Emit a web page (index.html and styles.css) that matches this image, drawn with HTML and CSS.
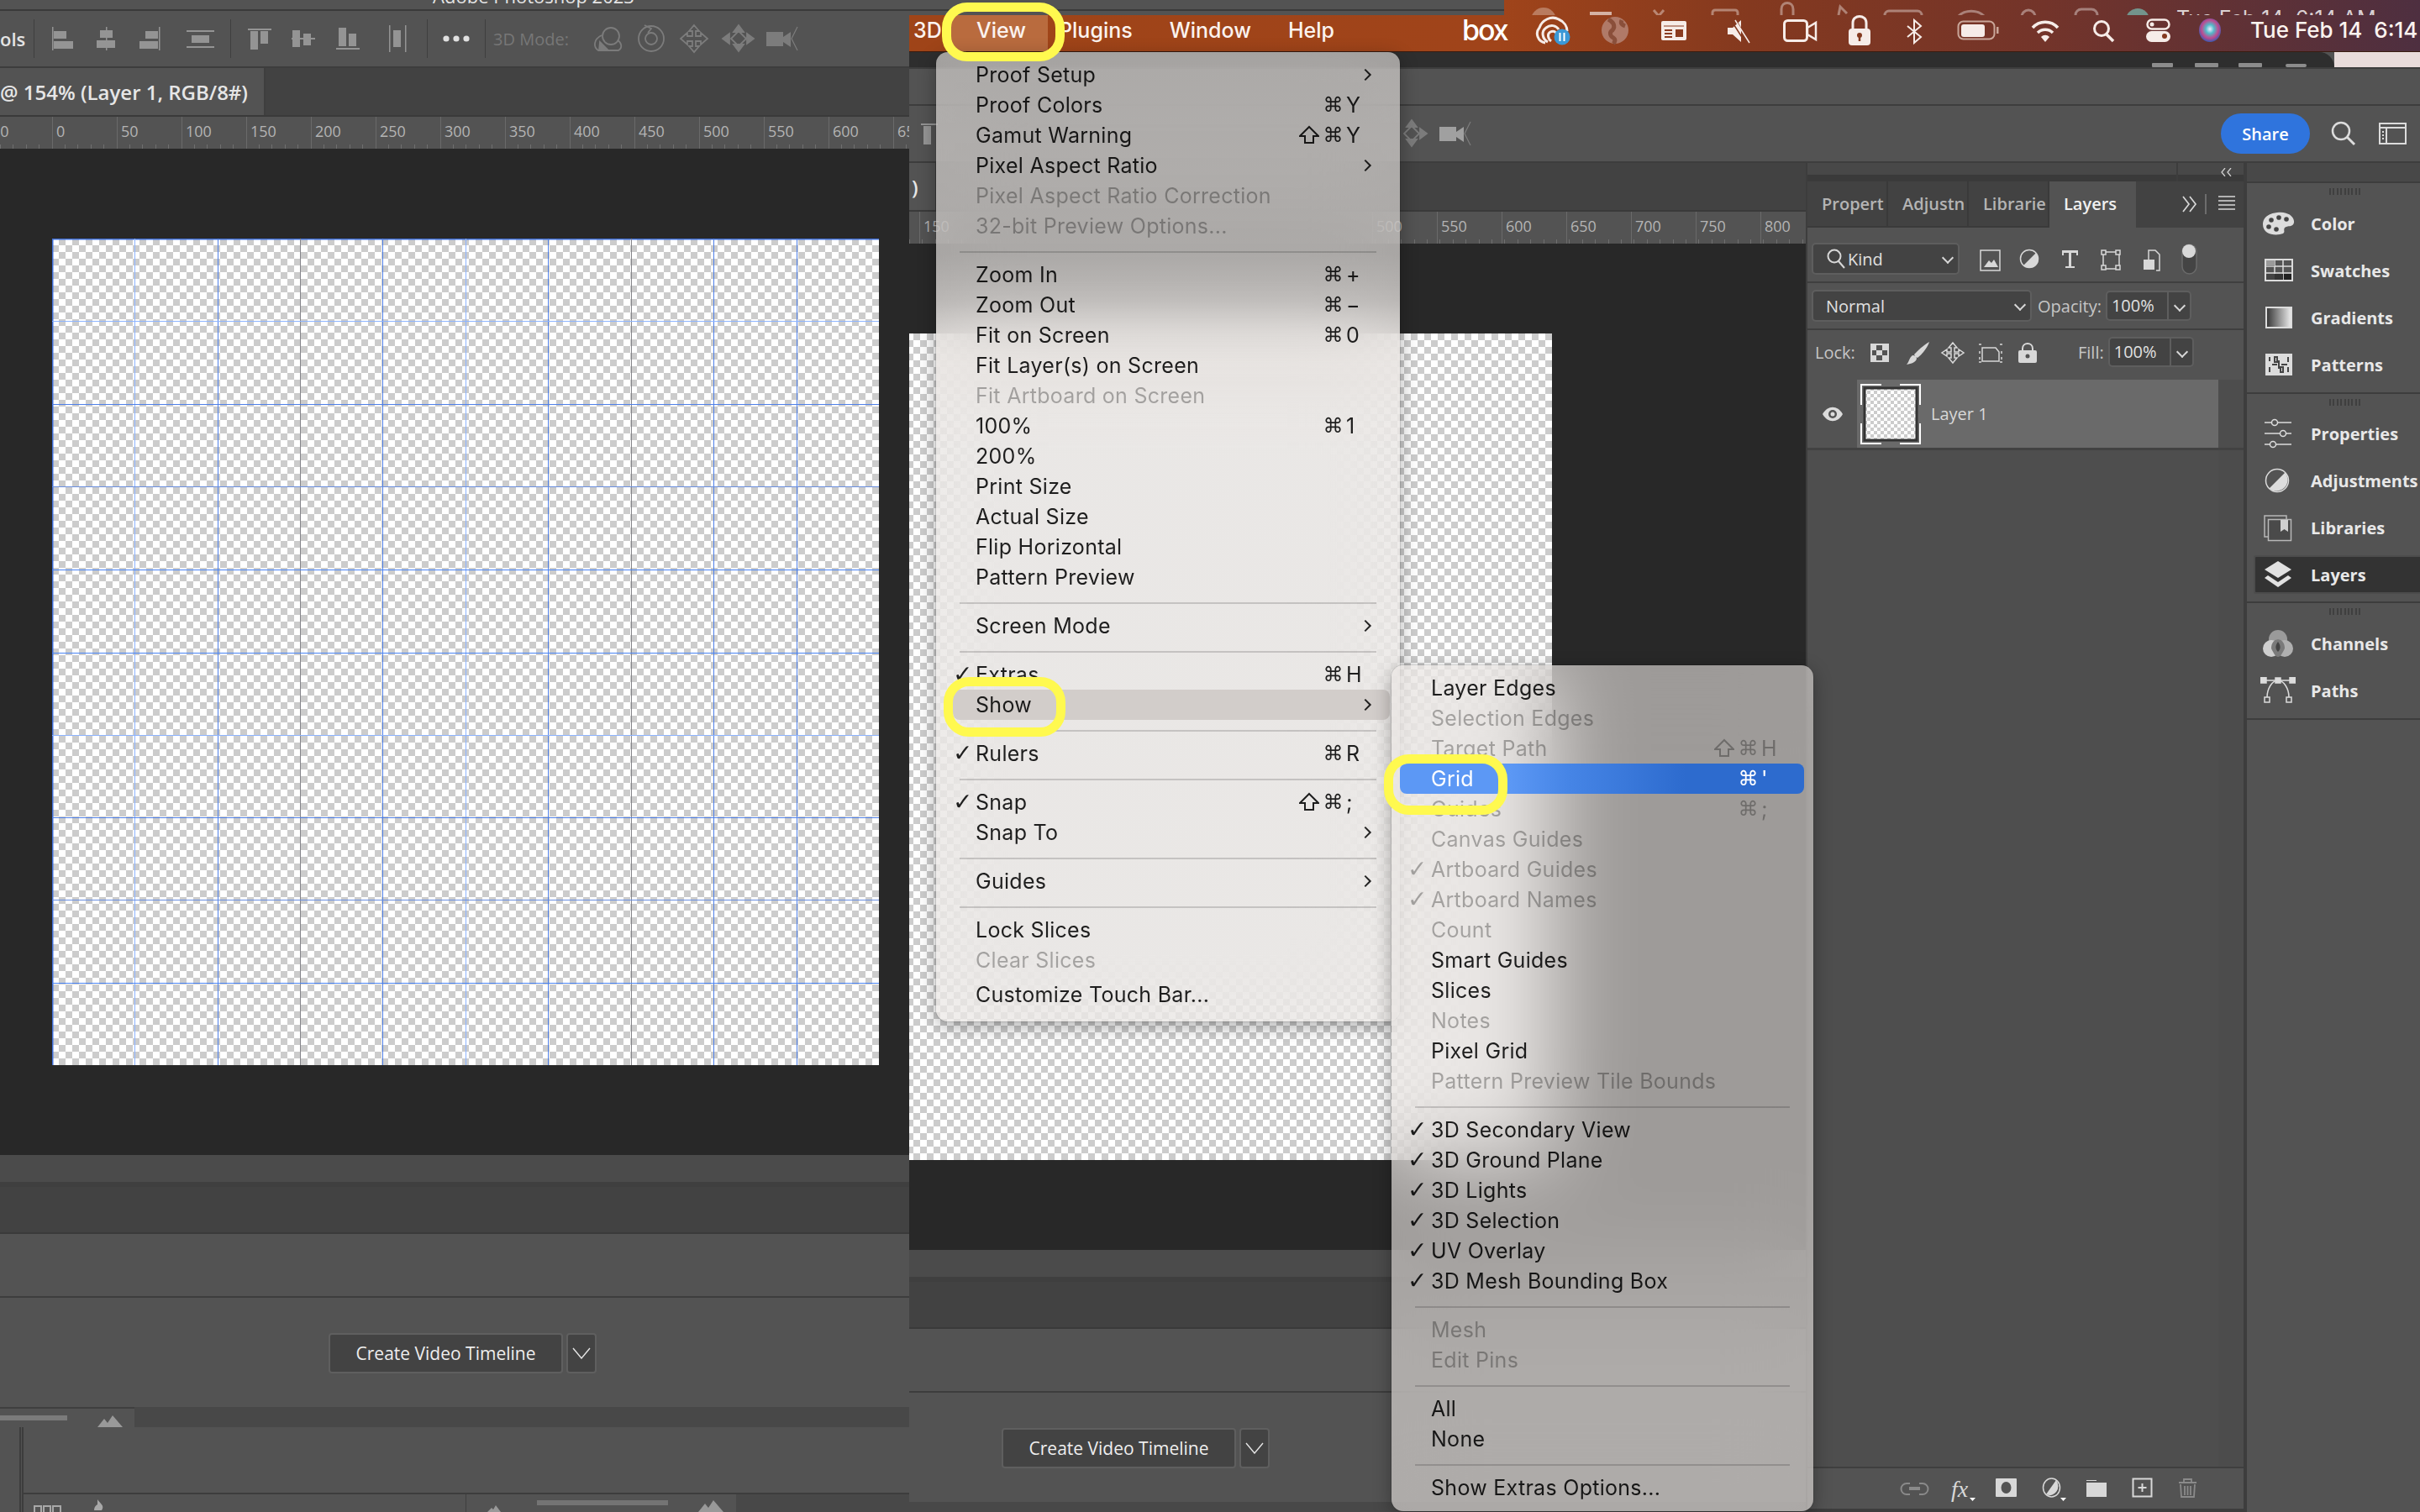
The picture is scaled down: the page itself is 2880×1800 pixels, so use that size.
FILE: index.html
```html
<!DOCTYPE html>
<html lang="en">
<head>
    <meta charset="UTF-8">
    <title>Photoshop - show grid</title>
    <link rel="stylesheet" href="styles.css">
</head>
<body>
    <div class="screen">
        <!-- Left capture: grid is on -->
        <section class="pane pane-left">
            <div class="top-strip"><span class="app-title">Adobe Photoshop 2023</span></div>
            <div class="options">
                <span class="tool-text">ols</span>
                <i class="vsep"></i>
                <svg width="233" height="66" viewBox="41 13 233 66" fill="#949494">
                    <rect x="62" y="32" width="1.5" height="28"/><rect x="64" y="37" width="15" height="9"/><rect x="64" y="49" width="23" height="9"/>
                    <rect x="126" y="32" width="1.5" height="28"/><rect x="119" y="36" width="15" height="9"/><rect x="115" y="48" width="22" height="9"/>
                    <rect x="189" y="32" width="1.5" height="28"/><rect x="173" y="37" width="15" height="9"/><rect x="166" y="49" width="22" height="9"/>
                    <rect x="222" y="36" width="33" height="2"/><rect x="228" y="42" width="21" height="9"/><rect x="222" y="55" width="33" height="2"/>
                </svg>
                <i class="vsep"></i>
                <svg width="233" height="66" viewBox="275 13 233 66" fill="#949494">
                    <rect x="295" y="34" width="28" height="2"/><rect x="298" y="37" width="9" height="22"/><rect x="310" y="37" width="9" height="15"/>
                    <rect x="347" y="45" width="28" height="2"/><rect x="348" y="36" width="9" height="20"/><rect x="361" y="40" width="9" height="14"/>
                    <rect x="400" y="57" width="28" height="2"/><rect x="403" y="33" width="9" height="22"/><rect x="415" y="40" width="9" height="15"/>
                    <rect x="463" y="30" width="1.5" height="32"/><rect x="468" y="36" width="9" height="20"/><rect x="482" y="30" width="1.5" height="32"/>
                </svg>
                <i class="vsep"></i>
                <svg width="68" height="66" viewBox="509 13 68 66" fill="#e0e0e0">
                    <circle cx="531" cy="46" r="3.6"/><circle cx="543" cy="46" r="3.6"/><circle cx="555" cy="46" r="3.6"/>
                </svg>
                <i class="vsep"></i>
                <span class="mode-label">3D Mode:</span>
                <svg width="270" height="66" viewBox="695 13 270 66" fill="none" stroke="#7c7c7c" stroke-width="1.8">
                    <circle cx="727" cy="43" r="10"/><path d="M716 42c-10 5-10 14-4 18h24c5-3 4-9-1-12"/><path d="M714 50l-1 10h11z" fill="#7c7c7c"/>
                    <circle cx="775" cy="46" r="15"/><circle cx="775" cy="46" r="7"/><path d="M767 30l8 4-4 5" />
                    <path d="M826 30l6 7h-4v6h6v-4l8 7-8 7v-4h-6v6h4l-6 7-6-7h4v-6h-6v4l-8-7 8-7v4h6v-6h-4z"/>
                    <path d="M879 30l6 8h-12zM879 61l6-8h-12zM860 46l8-6v12zM897 46l-8-6v12z" fill="#7c7c7c"/><path d="M879 37l9 9-9 9-9-9z"/>
                    <path d="M912 38h20v17h-20zM932 44l9-6v18l-9-6z" fill="#7c7c7c" stroke="none"/><path d="M949 32l-7 14 7 14" stroke-width="1.2"/>
                </svg>
            </div>
            <div class="doc">
                <div class="doc-tabs">
                    <div class="doc-tab tab-left">@ 154% (Layer 1, RGB/8#)</div>
                </div>
                <div class="ruler ruler-left">
                    <span>50</span><span>0</span><span>50</span><span>100</span><span>150</span><span>200</span><span>250</span><span>300</span><span>350</span><span>400</span><span>450</span><span>500</span><span>550</span><span>600</span><span>650</span>
                </div>
                <div class="canvas canvas-left">
                    <div class="artboard artboard-left">
                        <svg class="grid-lines" width="984" height="984" viewBox="0 0 984 984">
                            <path class="gl-edge" d="M.75 984V.75H984"/>
                            <path class="gl-light" d="M98.5 0v984M492.5 0v984"/>
                            <path class="gl-blue" d="M197.500 0v984M393.500 0v984M590.500 0v984M787.500 0v984M886.500 0v984"/>
                            <path class="gl-grey" d="M295.500 0v984M689.500 0v984"/>
                            <path class="gl-light" d="M0 98.500h984M0 591.500h984"/>
                            <path class="gl-blue" d="M0 197.500h984M0 689.500h984"/>
                            <path class="gl-mid" d="M0 295.500h984M0 787.500h984"/>
                            <path class="gl-strong" d="M0 394.500h984M0 493.500h984M0 886.500h984"/>
                        </svg>
                    </div>
                </div>
                <div class="strip-a"></div>
                <div class="strip-line"></div>
                <div class="strip-b"></div>
                <div class="strip-c"></div>
                <div class="timeline">
                    <button class="video-btn">Create Video Timeline</button>
                    <button class="video-drop"><svg width="22" height="14" viewBox="0 0 22 14" fill="none" stroke="#e6e6e6" stroke-width="1.4"><path d="M1 1l10 12L21 1"/></svg></button>
                </div>
                <div class="tl-foot">
                    <div class="tl-bar">
                        <div class="tl-zoom">
                            <span class="tl-thumb"></span>
                            <svg class="tl-mount" width="32" height="14" viewBox="0 0 32 14" fill="#999"><path d="M0 14L8 4l4 5 6-9 12 14z"/></svg>
                        </div>
                        <div class="tl-track"></div>
                    </div>
                    <div class="tl-body">
                        <div class="tl-empty"></div>
                        <div class="tl-tools">
                            <svg width="106" height="21" viewBox="28 1779 106 21" fill="none" stroke="#a8a8a8" stroke-width="2">
                                <path d="M41 1793h8v8h-8zM52 1793h8v8h-8zM63 1793h9v8h-9z"/>
                                <path d="M116 1791v-6c3 5 9 7 5 13h-9c0-4 2-6 4-7z" fill="#a8a8a8" stroke="none"/>
                            </svg>
                            <div class="tl-zoom-b">
                                <svg class="tl-mini" width="16" height="8" viewBox="0 0 16 8" fill="#999"><path d="M0 8l5-5 2 2 3-5 6 8z"/></svg>
                                <span class="tl-thumb-b"></span>
                                <svg width="32" height="14" viewBox="0 0 32 14" fill="#999"><path d="M0 14L8 4l4 5 6-9 12 14z"/></svg>
                            </div>
                            <div class="tl-dark"></div>
                        </div>
                    </div>
                </div>
            </div>
        </section>

        <!-- Right capture: menu open -->
        <section class="pane pane-right">
            <div class="menubar-wrap">
                <div class="menubar-top">
                    <div class="top-grey"></div>
                    <svg class="ghost-icons" width="790" height="18" viewBox="1790 0 790 18" fill="none" stroke="rgba(255,255,255,.38)" stroke-width="3">
                        <circle cx="1837" cy="24" r="15" fill="rgba(255,255,255,.3)" stroke="none"/>
                        <rect x="1892" y="14" width="26" height="20" fill="rgba(255,255,255,.6)" stroke="none"/>
                        <path d="M1968 12l6 7 6-7"/>
                        <rect x="2038" y="12" width="30" height="20" rx="3"/>
                        <path d="M2120 18v-7c0-10 14-10 14 0v7"/>
                        <path d="M2188 18l2-10 8 8"/>
                        <rect x="2243" y="13" width="44" height="20" rx="5"/>
                        <path d="M2330 20c8-9 24-9 32 0"/>
                        <circle cx="2414" cy="20" r="8"/>
                        <rect x="2470" y="11" width="26" height="16" rx="7"/>
                        <circle cx="2544" cy="24" r="14" fill="rgba(120,190,180,.7)" stroke="none"/>
                    </svg>
                    <span class="ghost-clock">Tue Feb 14  6:14 AM</span>
                </div>
                <div class="menubar">
                    <div class="mb-menus">
                        <span class="mb-item mb-first">3D</span>
                        <span class="mb-item mb-active">View</span>
                        <span class="mb-item">Plugins</span>
                        <span class="mb-item">Window</span>
                        <span class="mb-item">Help</span>
                    </div>
                    <span class="box-logo">box</span>
                    <svg class="status-icons" width="830" height="44" viewBox="1820 18 830 44">
                        <g fill="none" stroke="#f6ece8" stroke-width="3">
                            <path d="M1839 51a11 11 0 0 1-7-18c3-9 14-15 23-10 7 3 10 9 10 14"/><path d="M1842 50c-7-4-8-13-2-17 5-4 12-3 15 2"/><path d="M1846 49c-4-3-5-9-1-11 4-2 7 0 8 3"/>
                        </g>
                        <circle cx="1859" cy="44" r="9.500" fill="#3b98d6"/><path d="M1856.500 39v10M1861.500 39v10" stroke="#fff" stroke-width="2"/>
                        <circle cx="1922" cy="36" r="16" fill="#b07a68"/><path d="M1914 23c6 3 9 8 5 13-4 2-3 7 1 9 3 2 2 5 0 7M1930 24c-2 4 1 6 4 7" fill="none" stroke="#8a4f3a" stroke-width="5"/>
                        <rect x="1977" y="25" width="30" height="23" rx="2" fill="#f6ece8"/><path d="M1980 31h24" stroke="#8a3b20" stroke-width="1"/><path d="M1981 36h9M1981 40h9M1981 44h9" stroke="#8a3b20" stroke-width="2"/><rect x="1994" y="35" width="9" height="9" fill="#8a3b20"/>
                        <path d="M2056 33h6l10-9v26l-10-9h-6z" fill="#f6ece8"/><path d="M2060 24l18 28M2066 24l14 24" stroke="#83391f" stroke-width="1.500"/><path d="M2065 24l17 27" stroke="#f6ece8" stroke-width="1.500"/>
                        <rect x="2123.500" y="24.500" width="27" height="24" rx="4" fill="none" stroke="#f6ece8" stroke-width="3"/><path d="M2151 33l10-6v20l-10-6z" fill="none" stroke="#f6ece8" stroke-width="2.500"/>
                        <path d="M2205 36v-9c0-10 16-10 16 0v9" fill="none" stroke="#f6ece8" stroke-width="3"/><rect x="2200" y="34" width="26" height="20" rx="4" fill="#f6ece8"/><circle cx="2213" cy="42" r="3" fill="#83391f"/><path d="M2213 43v6" stroke="#83391f" stroke-width="2.500"/>
                        <path d="M2270 31l16 13-8 7V24l8 7-16 13" fill="none" stroke="#f6ece8" stroke-width="2"/>
                        <rect x="2330.500" y="25.500" width="43" height="21" rx="6" fill="none" stroke="#c9a699" stroke-width="2"/><rect x="2334" y="29" width="28" height="15" rx="3" fill="#f6ece8"/><rect x="2376" y="32" width="2.500" height="8" fill="#c9a699"/>
                        <g fill="none" stroke="#f6ece8" stroke-width="3.500"><path d="M2419 33c8-9 22-9 30 0"/><path d="M2425 39c5-5 13-5 18 0"/></g><path d="M2429 44c3-3 7-3 10 0l-5 6z" fill="#f6ece8"/>
                        <circle cx="2501" cy="34" r="8.500" fill="none" stroke="#f6ece8" stroke-width="3"/><path d="M2507 41l8 8" stroke="#f6ece8" stroke-width="3.500"/>
                        <rect x="2555.500" y="23.500" width="26" height="11" rx="5.500" fill="none" stroke="#f6ece8" stroke-width="2.500"/><circle cx="2561" cy="29" r="2.500" fill="#f6ece8"/><rect x="2554" y="37" width="29" height="13" rx="6.500" fill="#f6ece8"/><circle cx="2576" cy="43" r="3" fill="#83391f"/>
                        <defs><radialGradient id="siri" cx="50%" cy="45%" r="55%"><stop offset="0" stop-color="#eef"/><stop offset=".35" stop-color="#52b8c8"/><stop offset=".7" stop-color="#c04a90"/><stop offset="1" stop-color="#3a5ab0"/></radialGradient></defs>
                        <ellipse cx="2630" cy="36" rx="13" ry="14" fill="url(#siri)"/>
                    </svg>
                    <span class="clock">Tue Feb 14  6:14 AM</span>
                </div>
            </div>
            <div class="win-chrome">
                <svg class="chrome-ghost" width="210" height="5" viewBox="2570 75 210 5" fill="#8c8c8c">
                    <rect x="2571" y="75" width="25" height="5" rx="1"/><rect x="2622" y="75" width="28" height="5" rx="1"/><rect x="2674" y="75" width="28" height="5" rx="1"/><rect x="2730" y="76" width="25" height="4" rx="2"/>
                </svg>
            </div>
            <div class="title-gap"></div>
            <div class="options options-right">
                <svg class="right-align-icons" width="34" height="66" viewBox="1082 126 34 66" fill="#949494">
                    <rect x="1096" y="147" width="28" height="2"/><rect x="1099" y="150" width="9" height="22"/>
                </svg>
                <svg class="right-3d-icons" width="100" height="66" viewBox="1655 126 100 66" fill="none" stroke="#7c7c7c" stroke-width="1.8">
                    <path d="M1680 143l6 8h-12zM1680 174l6-8h-12zM1698 159l-8-6v12z" fill="#7c7c7c"/><path d="M1680 150l9 9-9 9-9-9z"/>
                    <path d="M1713 151h20v17h-20zM1733 157l9-6v18l-9-6z" fill="#a0a0a0" stroke="none"/><path d="M1750 145l-7 14 7 14" stroke-width="1.2"/>
                </svg>
                <button class="share-btn">Share</button>
                <svg class="opt-search" width="30" height="30" viewBox="0 0 30 30" fill="none" stroke="#dcdcdc" stroke-width="2.500"><circle cx="12" cy="12" r="10"/><path d="M19 19l9 9" stroke-width="3"/></svg>
                <svg class="opt-panel" width="33" height="26" viewBox="0 0 33 26" fill="none" stroke="#dcdcdc" stroke-width="2"><rect x="1" y="1" width="31" height="24"/><path d="M1 6h31M9 6v19" /><path d="M4 11h2M4 15h2M4 19h2" stroke-width="2"/></svg>
            </div>
            <div class="work">
                <div class="doc doc-right">
                    <div class="doc-tabs">
                        <div class="doc-tab tab-right">)</div>
                    </div>
                    <div class="ruler ruler-right">
                        <span>150</span><b class="ruler-gap"></b><span>500</span><span>550</span><span>600</span><span>650</span><span>700</span><span>750</span><span>800</span>
                    </div>
                    <div class="canvas">
                        <div class="artboard artboard-right"></div>
                    </div>
                    <div class="strip-a"></div>
                    <div class="strip-line"></div>
                    <div class="strip-b"></div>
                    <div class="strip-c"></div>
                    <div class="timeline timeline-right">
                        <button class="video-btn">Create Video Timeline</button>
                        <button class="video-drop"><svg width="22" height="14" viewBox="0 0 22 14" fill="none" stroke="#e6e6e6" stroke-width="1.4"><path d="M1 1l10 12L21 1"/></svg></button>
                    </div>
                    <div class="tl-end"></div>
                </div>

                <!-- Layers panel -->
                <div class="layers-panel">
                    <div class="panel-head">
                        <span class="panel-rule"></span>
                        <svg class="panel-collapse" width="14" height="10" viewBox="0 0 14 10" fill="none" stroke="#d0d0d0" stroke-width="1.300"><path d="M5 0L1 5l4 5M12 0L8 5l4 5"/></svg>
                    </div>
                    <div class="panel-tabs">
                        <div class="ptab"><span>Propert</span></div>
                        <div class="ptab"><span>Adjustn</span></div>
                        <div class="ptab"><span>Librarie</span></div>
                        <div class="ptab ptab-on"><span>Layers</span></div>
                        <svg class="tabs-menu" width="64" height="24" viewBox="0 0 64 24" fill="none" stroke="#d8d8d8" stroke-width="1.700">
                            <path d="M1 3l7 9-7 9M9 3l7 9-7 9"/><path d="M28 0v24" stroke="#8a8a8a" stroke-width="1.200"/>
                            <path d="M43 3h20M43 8h20M43 13h20M43 18h20" stroke-width="1.600"/>
                        </svg>
                    </div>
                    <div class="prow prow-filter">
                        <div class="drop drop-kind">
                            <svg width="22" height="24" viewBox="0 0 22 24" fill="none" stroke="#d8d8d8" stroke-width="2"><circle cx="9" cy="9" r="7.500"/><path d="M14 15l7 8"/></svg>
                            <span>Kind</span>
                            <i class="chev"></i>
                        </div>
                        <svg class="filter-icons" width="280" height="64" viewBox="2340 271 280 64">
                            <g fill="none" stroke="#d8d8d8" stroke-width="1.500">
                                <rect x="2357" y="298" width="23" height="24"/>
                                <circle cx="2415" cy="308" r="10.500"/>
                                <rect x="2503" y="300" width="19" height="20"/>
                                <rect x="2501" y="298" width="5" height="5" fill="#535353"/><rect x="2518" y="298" width="5" height="5" fill="#535353"/><rect x="2501" y="316" width="5" height="5" fill="#535353"/><rect x="2518" y="316" width="5" height="5" fill="#535353"/>
                                <path d="M2557 309v-11h8l5 5v19h-4"/>
                            </g>
                            <g fill="#d8d8d8">
                                <path d="M2361 318l6-8 3 3 3-4 5 9z"/>
                                <path d="M2423 301a10.500 10.500 0 0 1-15 15z"/>
                                <path d="M2454 298h19v6h-2v-3h-6v16h4v2h-11v-2h4v-16h-6v3h-2z"/>
                                <rect x="2551" y="309" width="13" height="12"/>
                            </g>
                            <rect x="2597" y="291" width="17" height="35" rx="8.500" fill="#444" stroke="#6a6a6a" stroke-width="1.500"/>
                            <circle cx="2605" cy="299" r="8" fill="#d8d8d8"/>
                        </svg>
                    </div>
                    <div class="prow prow-blend">
                        <div class="drop drop-blend"><span>Normal</span><i class="chev"></i></div>
                        <span class="plabel plabel-op">Opacity:</span>
                        <div class="num-box"><span>100%</span><b><i class="chev"></i></b></div>
                    </div>
                    <div class="prow prow-lock">
                        <span class="plabel">Lock:</span>
                        <svg class="lock-icons" width="220" height="58" viewBox="2215 393 220 58">
                            <rect x="2225" y="409" width="22" height="22" fill="#d8d8d8"/>
                            <path d="M2232 411h7v6h-7zM2232 423h7v6h-7zM2227 417h5v6h-5zM2239 417h6v6h-6z" fill="#535353"/>
                            <path d="M2295 407c-2 7-9 15-14 19-2-1-3-2-4-4 5-5 12-12 18-15zM2275 423c3 0 5 2 5 4-1 4-6 6-12 7 3-3 3-8 7-11z" fill="#d8d8d8"/>
                            <path d="M2323 408l5 6h-3v5h5v-3l6 4-6 4v-3h-5v5h3l-5 6-5-6h3v-5h-5v3l-6-4 6-4v3h5v-5h-3z" fill="none" stroke="#d8d8d8" stroke-width="1.500"/>
                            <path d="M2358 414h16l4 5v11h-20z" fill="none" stroke="#d8d8d8" stroke-width="1.500"/>
                            <path d="M2354 410h3M2379 410h3M2354 431h3M2379 431h3M2355 418v3M2355 425v3M2381 418v3M2381 425v3" stroke="#d8d8d8" stroke-width="1.500"/>
                            <path d="M2406 418v-3c0-8 12-8 12 0v3" fill="none" stroke="#d8d8d8" stroke-width="2"/>
                            <rect x="2401" y="417" width="22" height="15" rx="2" fill="#d8d8d8"/><circle cx="2412" cy="424" r="2.500" fill="#535353"/>
                        </svg>
                        <span class="plabel plabel-fill">Fill:</span>
                        <div class="num-box"><span>100%</span><b><i class="chev"></i></b></div>
                    </div>
                    <div class="layer-wrap">
                        <div class="layer-eye">
                            <svg width="26" height="18" viewBox="0 0 26 18"><path d="M1 9c6-11 18-11 24 0-6 11-18 11-24 0z" fill="#dcdcdc"/><circle cx="13" cy="9" r="5" fill="#535353"/><circle cx="13" cy="9" r="2.500" fill="#dcdcdc"/></svg>
                        </div>
                        <div class="layer-main">
                            <svg class="layer-thumb" width="72" height="72" viewBox="0 0 72 72">
                                <defs><pattern id="thumb-check" width="8" height="8" patternUnits="userSpaceOnUse"><rect width="8" height="8" fill="#fff"/><rect width="4" height="4" fill="#ccc"/><rect x="4" y="4" width="4" height="4" fill="#ccc"/></pattern></defs>
                                <rect x="5" y="5" width="62" height="62" fill="url(#thumb-check)" stroke="#333" stroke-width="3"/>
                                <path d="M1 25V1h24M47 1h24v24M71 47v24H47M25 71H1V47" fill="none" stroke="#fff" stroke-width="2"/>
                            </svg>
                            <span class="layer-name">Layer 1</span>
                        </div>
                        <div class="layer-scroll"></div>
                    </div>
                    <div class="panel-empty"><div class="panel-scroll"></div></div>
                    <div class="panel-foot">
                        <svg class="foot-icons" width="380" height="48" viewBox="2250 1748 380 48">
                            <path d="M2273 1766h-4a6 6 0 0 0 0 13h4M2284 1766h4a6 6 0 0 1 0 13h-4" fill="none" stroke="#8a8a8a" stroke-width="2"/><rect x="2272" y="1770" width="13" height="4" fill="#8a8a8a"/>
                            <text class="fx-text" x="2322" y="1782">fx</text>
                            <path d="M2344 1783h7l-3.500 4zM2452 1783h7l-3.500 4z" fill="#fff"/>
                            <rect x="2375" y="1760" width="25" height="22" rx="1" fill="#d8d8d8"/><ellipse cx="2387.500" cy="1771" rx="6" ry="7" fill="#535353"/>
                            <ellipse cx="2441.500" cy="1771" rx="10" ry="11" fill="none" stroke="#d8d8d8" stroke-width="1.500"/><path d="M2447 1762a10 11 0 0 1-12 17z" fill="#d8d8d8"/>
                            <path d="M2483 1762h12v1h-12zM2483 1765h24v17h-24z" fill="#d8d8d8"/>
                            <rect x="2538.500" y="1760.500" width="22" height="21" fill="none" stroke="#d8d8d8" stroke-width="2"/><path d="M2549.500 1766v10M2544.500 1771h10" stroke="#d8d8d8" stroke-width="2"/>
                            <path d="M2593 1765h21M2599 1765v-4h9v4M2595 1767l1 15h15l1-15M2600 1769v11M2603.500 1769v11M2607 1769v11" fill="none" stroke="#8a8a8a" stroke-width="1.800"/>
                        </svg>
                    </div>
                </div>
                <div class="side-rule"></div>

                <!-- Collapsed panel dock -->
                <div class="dock">
                    <div class="dock-head"></div>
                    <div class="dock-group">
                        <div class="grip"></div>
                        <div class="dock-row">
                            <svg width="42" height="30" viewBox="0 0 42 30"><path d="M20 2c12-2 21 5 20 12-1 6-8 3-11 6-2 3 1 5-2 7-8 3-24 2-24-11C3 8 10 3 20 2z" fill="#dcdcdc"/><g fill="#444"><circle cx="13" cy="11" r="2.800"/><circle cx="22" cy="8" r="2.800"/><circle cx="31" cy="10" r="2.800"/><circle cx="10" cy="19" r="2.800"/><circle cx="19" cy="22" r="2.800"/></g></svg>
                            <span>Color</span>
                        </div>
                        <div class="dock-row">
                            <svg width="42" height="30" viewBox="0 0 42 30"><rect x="6" y="2" width="32" height="25" fill="none" stroke="#dcdcdc" stroke-width="2"/><path d="M17 2v25M27 2v25M6 10h32M6 18h32" stroke="#dcdcdc" stroke-width="1.500"/><rect x="7" y="3" width="10" height="7" fill="#9a9a9a"/><rect x="28" y="19" width="9" height="7" fill="#222"/><rect x="17" y="19" width="10" height="7" fill="#333"/><rect x="7" y="19" width="10" height="7" fill="#444"/></svg>
                            <span>Swatches</span>
                        </div>
                        <div class="dock-row">
                            <svg width="42" height="30" viewBox="0 0 42 30"><defs><linearGradient id="grad-ico"><stop offset="0" stop-color="#333"/><stop offset="1" stop-color="#eee"/></linearGradient></defs><rect x="7" y="3" width="30" height="24" fill="url(#grad-ico)" stroke="#dcdcdc" stroke-width="2"/></svg>
                            <span>Gradients</span>
                        </div>
                        <div class="dock-row">
                            <svg width="42" height="30" viewBox="0 0 42 30"><rect x="6" y="2" width="32" height="26" fill="#dcdcdc"/><path d="M11 6v5M11 18v6M17 6h3v6h-3zM24 18h3v6h-3zM33 6v6M33 18v6M14 15h6M25 15h7M22 10v10" stroke="#444" stroke-width="2" fill="none"/></svg>
                            <span>Patterns</span>
                        </div>
                    </div>
                    <div class="dock-group dock-group-mid">
                        <div class="grip"></div>
                        <div class="dock-row">
                            <svg width="42" height="38" viewBox="0 0 42 38" fill="none" stroke="#dcdcdc" stroke-width="1.500"><path d="M5 6h9M21 6h16M5 19h18M31 19h6M5 32h6M19 32h18"/><circle cx="17" cy="6" r="3.500"/><circle cx="27" cy="19" r="3.500"/><circle cx="15" cy="32" r="3.500"/></svg>
                            <span>Properties</span>
                        </div>
                        <div class="dock-row">
                            <svg width="42" height="30" viewBox="0 0 42 30"><circle cx="20" cy="15" r="13.500" fill="none" stroke="#dcdcdc" stroke-width="1.500"/><path d="M29.500 5.500a13.500 13.500 0 0 1-19 19z" fill="#dcdcdc"/></svg>
                            <span>Adjustments</span>
                        </div>
                        <div class="dock-row">
                            <svg width="42" height="34" viewBox="0 0 42 34" fill="none" stroke="#b8b8b8" stroke-width="1.500"><path d="M10 28H5V3h26v4"/><rect x="9.500" y="7.500" width="27" height="25" fill="#4a4a4a"/><path d="M24 8h9v14l-4.500-3-4.500 3z" fill="#d0d0d0" stroke="none"/></svg>
                            <span>Libraries</span>
                        </div>
                        <div class="dock-row dock-on">
                            <svg width="42" height="34" viewBox="0 0 42 34" fill="#e2e2e2"><path d="M21 1l16 10-16 10L5 11z"/><path d="M9 18l12 8 12-8 4 3-16 11L5 21z"/></svg>
                            <span>Layers</span>
                        </div>
                    </div>
                    <div class="dock-group">
                        <div class="grip"></div>
                        <div class="dock-row">
                            <svg width="42" height="34" viewBox="0 0 42 34"><circle cx="21" cy="12" r="11" fill="#9a9a9a"/><circle cx="13" cy="23" r="10" fill="#cfcfcf"/><circle cx="29" cy="23" r="10" fill="#b0b0b0"/><path d="M21 12c6 1 8 6 8 11-3 6-5 10-8 10s-5-4-8-10c0-5 2-10 8-11z" fill="#7a7a7a"/><path d="M21 15c3 4 4 8 0 12-4-4-3-8 0-12z" fill="#444"/></svg>
                            <span>Channels</span>
                        </div>
                        <div class="dock-row">
                            <svg width="42" height="32" viewBox="0 0 42 32" fill="none" stroke="#dcdcdc" stroke-width="1.500"><path d="M5 4h32"/><path d="M8 24C8 14 14 4 21 4s13 10 13 20"/><rect x="0" y="0" width="7" height="7" fill="#dcdcdc"/><rect x="18" y="1" width="6" height="6" fill="#dcdcdc"/><rect x="35" y="0" width="7" height="7" fill="#dcdcdc"/><rect x="5" y="24" width="6" height="6"/><rect x="31" y="24" width="6" height="6"/></svg>
                            <span>Paths</span>
                        </div>
                    </div>
                </div>
            </div>
        </section>

        <!-- View menu -->
        <div class="menu menu-view">
            <div class="row"><span class="tick"></span><span class="label">Proof Setup</span><i class="arrow"></i></div>
            <div class="row"><span class="tick"></span><span class="label">Proof Colors</span><span class="keys"><em>⌘</em><b>Y</b></span></div>
            <div class="row"><span class="tick"></span><span class="label">Gamut Warning</span><span class="keys"><svg class="shift" width="24" height="24" viewBox="0 0 24 24"><path d="M12 2L23 13h-6v8H7v-8H1z"/></svg><em>⌘</em><b>Y</b></span></div>
            <div class="row"><span class="tick"></span><span class="label">Pixel Aspect Ratio</span><i class="arrow"></i></div>
            <div class="row off"><span class="tick"></span><span class="label">Pixel Aspect Ratio Correction</span></div>
            <div class="row off"><span class="tick"></span><span class="label">32-bit Preview Options...</span></div>
            <div class="sep"></div>
            <div class="row"><span class="tick"></span><span class="label">Zoom In</span><span class="keys"><em>⌘</em><b>+</b></span></div>
            <div class="row"><span class="tick"></span><span class="label">Zoom Out</span><span class="keys"><em>⌘</em><b>−</b></span></div>
            <div class="row"><span class="tick"></span><span class="label">Fit on Screen</span><span class="keys"><em>⌘</em><b>0</b></span></div>
            <div class="row"><span class="tick"></span><span class="label">Fit Layer(s) on Screen</span></div>
            <div class="row off"><span class="tick"></span><span class="label">Fit Artboard on Screen</span></div>
            <div class="row"><span class="tick"></span><span class="label">100%</span><span class="keys"><em>⌘</em><b>1</b></span></div>
            <div class="row"><span class="tick"></span><span class="label">200%</span></div>
            <div class="row"><span class="tick"></span><span class="label">Print Size</span></div>
            <div class="row"><span class="tick"></span><span class="label">Actual Size</span></div>
            <div class="row"><span class="tick"></span><span class="label">Flip Horizontal</span></div>
            <div class="row"><span class="tick"></span><span class="label">Pattern Preview</span></div>
            <div class="sep"></div>
            <div class="row"><span class="tick"></span><span class="label">Screen Mode</span><i class="arrow"></i></div>
            <div class="sep"></div>
            <div class="row"><span class="tick">✓</span><span class="label">Extras</span><span class="keys"><em>⌘</em><b>H</b></span></div>
            <div class="row row-hover"><span class="tick"></span><span class="label">Show</span><i class="arrow"></i></div>
            <div class="sep"></div>
            <div class="row"><span class="tick">✓</span><span class="label">Rulers</span><span class="keys"><em>⌘</em><b>R</b></span></div>
            <div class="sep"></div>
            <div class="row"><span class="tick">✓</span><span class="label">Snap</span><span class="keys"><svg class="shift" width="24" height="24" viewBox="0 0 24 24"><path d="M12 2L23 13h-6v8H7v-8H1z"/></svg><em>⌘</em><b>;</b></span></div>
            <div class="row"><span class="tick"></span><span class="label">Snap To</span><i class="arrow"></i></div>
            <div class="sep"></div>
            <div class="row"><span class="tick"></span><span class="label">Guides</span><i class="arrow"></i></div>
            <div class="sep"></div>
            <div class="row"><span class="tick"></span><span class="label">Lock Slices</span></div>
            <div class="row off"><span class="tick"></span><span class="label">Clear Slices</span></div>
            <div class="row row-touch"><span class="tick"></span><span class="label">Customize Touch Bar...</span></div>
        </div>

        <!-- Show submenu -->
        <div class="menu menu-show">
            <div class="row"><span class="tick"></span><span class="label">Layer Edges</span></div>
            <div class="row off"><span class="tick"></span><span class="label">Selection Edges</span></div>
            <div class="row off"><span class="tick"></span><span class="label">Target Path</span><span class="keys"><svg class="shift" width="24" height="24" viewBox="0 0 24 24"><path d="M12 2L23 13h-6v8H7v-8H1z"/></svg><em>⌘</em><b>H</b></span></div>
            <div class="row row-picked"><span class="tick"></span><span class="label">Grid</span><span class="keys"><em>⌘</em><b>'</b></span></div>
            <div class="row off"><span class="tick"></span><span class="label">Guides</span><span class="keys"><em>⌘</em><b>;</b></span></div>
            <div class="row off"><span class="tick"></span><span class="label">Canvas Guides</span></div>
            <div class="row off"><span class="tick">✓</span><span class="label">Artboard Guides</span></div>
            <div class="row off"><span class="tick">✓</span><span class="label">Artboard Names</span></div>
            <div class="row off"><span class="tick"></span><span class="label">Count</span></div>
            <div class="row"><span class="tick"></span><span class="label">Smart Guides</span></div>
            <div class="row"><span class="tick"></span><span class="label">Slices</span></div>
            <div class="row off"><span class="tick"></span><span class="label">Notes</span></div>
            <div class="row"><span class="tick"></span><span class="label">Pixel Grid</span></div>
            <div class="row off"><span class="tick"></span><span class="label">Pattern Preview Tile Bounds</span></div>
            <div class="sep"></div>
            <div class="row"><span class="tick">✓</span><span class="label">3D Secondary View</span></div>
            <div class="row"><span class="tick">✓</span><span class="label">3D Ground Plane</span></div>
            <div class="row"><span class="tick">✓</span><span class="label">3D Lights</span></div>
            <div class="row"><span class="tick">✓</span><span class="label">3D Selection</span></div>
            <div class="row"><span class="tick">✓</span><span class="label">UV Overlay</span></div>
            <div class="row"><span class="tick">✓</span><span class="label">3D Mesh Bounding Box</span></div>
            <div class="sep"></div>
            <div class="row off"><span class="tick"></span><span class="label">Mesh</span></div>
            <div class="row off"><span class="tick"></span><span class="label">Edit Pins</span></div>
            <div class="sep"></div>
            <div class="row"><span class="tick"></span><span class="label">All</span></div>
            <div class="row"><span class="tick"></span><span class="label">None</span></div>
            <div class="sep"></div>
            <div class="row"><span class="tick"></span><span class="label">Show Extras Options...</span></div>
        </div>

        <!-- Yellow callouts -->
        <div class="callout callout-view"></div>
        <div class="callout callout-show"></div>
        <div class="callout callout-grid"></div>
    </div>
</body>
</html>
```

FILE: styles.css
```css
/* Page */
html, body {
    margin: 0;
    padding: 0;
}
body {
    width: 2880px;
    height: 1800px;
    overflow: hidden;
    background: #535353;
    font-family: "Open Sans", "Noto Sans", sans-serif;
    color: #dcdcdc;
}
button {
    font-family: inherit;
}
svg {
    display: block;
    flex: none;
}
.screen {
    position: relative;
    display: flex;
    width: 2880px;
    height: 1800px;
    overflow: hidden;
}
.pane {
    display: flex;
    flex-direction: column;
    overflow: hidden;
    background: #535353;
}
.pane-left {
    width: 1082px;
    flex: none;
}
.pane-right {
    flex: 1;
    min-width: 0;
    background: linear-gradient(#e9dcdb, #e9dcdb) 1696px 62px / 102px 18px no-repeat, #535353;
}

/* Title bar remains */
.top-strip {
    position: relative;
    height: 11px;
    border-bottom: 2px solid #3a3a3a;
    overflow: hidden;
    text-align: center;
    width: 1270px;
    flex: none;
}
.app-title {
    position: absolute;
    left: 0;
    right: 0;
    top: -17px;
    font-size: 22px;
    line-height: 24px;
    color: #e4e4e4;
}

/* Options bar */
.options {
    display: flex;
    align-items: center;
    height: 66px;
    border-bottom: 2px solid #3d3d3d;
    flex: none;
}
.vsep {
    width: 1px;
    height: 46px;
    flex: none;
    background: #3f3f3f;
}
.tool-text {
    width: 40px;
    flex: none;
    font-size: 22px;
    font-weight: 600;
    color: #e4e4e4;
}
.mode-label {
    width: 117px;
    flex: none;
    box-sizing: border-box;
    padding-left: 9px;
    font-size: 20px;
    color: #777;
}
.options-right {
    width: 100%;
}
.right-3d-icons {
    margin-left: 539px;
}
.share-btn {
    width: 106px;
    height: 48px;
    margin-left: 888px;
    border: none;
    border-radius: 24px;
    background: #2f74dd;
    color: #fff;
    font-size: 20px;
    font-weight: 600;
}
.opt-search {
    margin-left: 25px;
}
.opt-panel {
    margin-left: 27px;
}

/* Document column */
.doc {
    display: flex;
    flex-direction: column;
    width: 1348px;
    flex: none;
}
.doc-right {
    width: 1067px;
}
.doc-tabs {
    height: 56px;
    display: flex;
    flex: none;
    background: #424242;
    border-bottom: 2px solid #3a3a3a;
}
.doc-tab {
    display: flex;
    align-items: center;
    background: #535353;
    border-right: 2px solid #3f3f3f;
    font-size: 24px;
    font-weight: 600;
    color: #e6e6e6;
    white-space: nowrap;
}
.tab-left {
    width: 314px;
}
.tab-right {
    width: 33px;
    padding-left: 3px;
    box-sizing: border-box;
}
.ruler {
    display: flex;
    flex: none;
    height: 38px;
    background:
        repeating-linear-gradient(to right, #6f6f6f 0, #6f6f6f 1px, transparent 1px, transparent 15.4px) 0 100% / 100% 5px no-repeat,
        #535353;
    overflow: hidden;
}
.ruler span {
    flex: none;
    width: 77px;
    box-sizing: border-box;
    padding-left: 4px;
    border-left: 1px solid #6a6a6a;
    font-size: 18px;
    line-height: 34px;
    color: #b4b4b4;
}
.ruler-gap {
    width: 462px;
    flex: none;
}
.ruler-left {
    margin-left: -15px;
    background-position: 15px 100%, 0 0;
}
.ruler-right {
    padding-left: 12px;
}
.canvas {
    height: 1198px;
    flex: none;
    box-sizing: border-box;
    padding-top: 107px;
    background: #282828;
}
.canvas-left {
    padding-left: 62px;
}
.artboard {
    position: relative;
    height: 984px;
    background: conic-gradient(#ccc 25%, #fff 0 50%, #ccc 0 75%, #fff 0) 0 0 / 16px 16px;
}
.artboard-left {
    width: 984px;
}
.artboard-right {
    width: 765px;
    background-position: -3px 0;
}
.grid-lines {
    position: absolute;
    left: 0;
    top: 0;
    fill: none;
    stroke-width: 1;
}
.gl-edge {
    stroke: #3f6fd8;
    stroke-width: 1.5;
}
.gl-light {
    stroke: #8db4ff;
}
.gl-blue {
    stroke: #4f80e8;
}
.gl-mid {
    stroke: #6a8fe0;
}
.gl-strong {
    stroke: #4a85f5;
}
.gl-grey {
    stroke: #85858a;
}
.strip-a {
    height: 32px;
    flex: none;
    background: #4b4b4b;
}
.strip-line {
    height: 6px;
    flex: none;
    background: #3f3f3f;
}
.strip-b {
    height: 54px;
    flex: none;
    background: #424242;
    border-bottom: 2px solid #3a3a3a;
}
.strip-c {
    height: 74px;
    flex: none;
    background: #535353;
    border-bottom: 2px solid #3d3d3d;
}

/* Timeline */
.timeline {
    display: flex;
    align-items: center;
    flex: none;
    height: 130px;
    box-sizing: border-box;
    padding: 1px 0 0 391px;
    gap: 4px;
}
.timeline-right {
    padding-left: 110px;
}
.video-btn,
.video-drop {
    height: 48px;
    background: #434343;
    border: 2px solid #5f5f5f;
    border-radius: 4px;
    color: #eee;
    font-size: 21px;
    font-weight: 400;
    padding: 0;
}
.video-btn {
    width: 279px;
}
.video-drop {
    width: 36px;
    display: flex;
    align-items: center;
    justify-content: center;
}
.tl-foot {
    display: flex;
    flex-direction: column;
    flex: none;
    height: 125px;
}
.tl-bar {
    display: flex;
    height: 24px;
    flex: none;
}
.tl-zoom {
    display: flex;
    width: 160px;
    border-top: 2px solid #3f3f3f;
    box-sizing: border-box;
    align-items: flex-start;
    flex: none;
}
.tl-thumb {
    width: 80px;
    height: 6px;
    margin-top: 8px;
    background: #7b7b7b;
}
.tl-mount {
    margin: 8px 0 0 36px;
}
.tl-track {
    flex: 1;
    background: #484848;
}
.tl-body {
    display: flex;
    flex-direction: column;
    flex: 1;
    margin-left: 23px;
    border-left: 5px double #3d3d3d;
}
.tl-empty {
    flex: 1;
}
.tl-tools {
    display: flex;
    height: 21px;
    flex: none;
    border-top: 2px solid #3d3d3d;
}
.tl-zoom-b {
    display: flex;
    align-items: flex-end;
    width: 321px;
    margin-left: 420px;
    flex: none;
    border-left: 1px solid #3f3f3f;
}
.tl-mini {
    margin: 0 0 0 25px;
}
.tl-thumb-b {
    width: 156px;
    height: 6px;
    margin: 0 36px 8px 43px;
    background: #747474;
}
.tl-dark {
    flex: 1;
    background: #484848;
}
.tl-end {
    height: 12px;
    flex: none;
    background: #484848;
}

/* Right capture, top chrome */
.menubar-wrap {
    height: 62px;
    flex: none;
    background: linear-gradient(to right, #9f4418 0, #a0441a 700px, #84391f 1000px, #73342a 1350px, #4e2f40 100%);
}
.menubar-top {
    display: flex;
    height: 18px;
    overflow: hidden;
}
.top-grey {
    width: 708px;
    height: 11px;
    flex: none;
    background: #535353;
    border-bottom: 2px solid #3a3a3a;
    box-shadow: 0 5px 0 #535353;
}
.ghost-clock {
    height: 18px;
    overflow: hidden;
    margin-left: 10px;
    flex: none;
    font-family: Inter, sans-serif;
    font-size: 25px;
    line-height: 44px;
    white-space: pre;
    color: rgba(255, 255, 255, .8);
}
.menubar {
    display: flex;
    align-items: center;
    height: 43px;
    border-bottom: 1px solid #3a1c10;
    font-family: Inter, sans-serif;
    color: #fbf3ef;
    overflow: hidden;
}
.mb-menus {
    display: flex;
    align-items: center;
    width: 658px;
    height: 100%;
    flex: none;
}
.mb-item {
    height: 100%;
    line-height: 36px;
    padding: 0 22px;
    font-size: 25px;
    font-weight: 500;
}
.mb-first {
    padding: 0 0 0 5px;
    width: 51px;
    box-sizing: border-box;
}
.mb-active {
    padding: 0 26px 0 34px;
    margin-right: -9px;
    margin-left: -5px;
    background: #b96b3e;
}
.box-logo {
    width: 80px;
    flex: none;
    margin-bottom: 8px;
    font-size: 34px;
    font-weight: 500;
    letter-spacing: -2px;
    color: #fff;
    line-height: 34px;
}
.clock {
    margin-left: 28px;
    flex: none;
    font-size: 26px;
    line-height: 36px;
    align-self: flex-start;
    white-space: pre;
    font-weight: 500;
}
.win-chrome {
    display: flex;
    justify-content: flex-end;
    align-items: flex-end;
    width: 1696px;
    height: 18px;
    flex: none;
    box-sizing: border-box;
    padding-right: 8px;
    background: #2e2e2e;
    border-top-right-radius: 18px;
}
.title-gap {
    height: 42px;
    flex: none;
    background: #535353;
    border-top: 2px solid #3d3d3d;
    border-bottom: 2px solid #3d3d3d;
}

/* Work area under the options bar */
.work {
    display: flex;
    flex: 1;
    min-height: 0;
}

/* Layers panel */
.layers-panel {
    display: flex;
    flex-direction: column;
    width: 521px;
    flex: none;
    box-sizing: border-box;
    border-left: 2px solid #3d3d3d;
    background: #535353;
}
.panel-head {
    position: relative;
    height: 14px;
    flex: none;
    background: #484848;
    border-bottom: 8px solid #3a3a3a;
}
.panel-rule {
    position: absolute;
    left: 439px;
    top: 0;
    width: 2px;
    height: 22px;
    background: #3d3d3d;
}
.panel-collapse {
    position: absolute;
    left: 492px;
    top: 6px;
}
.panel-tabs {
    display: flex;
    height: 55px;
    flex: none;
    align-items: stretch;
    background: #424242;
}
.ptab {
    width: 96px;
    flex: none;
    overflow: hidden;
    box-sizing: border-box;
    padding-left: 17px;
    border-right: 2px solid #3a3a3a;
    border-bottom: 2px solid #3a3a3a;
    font-size: 20px;
    font-weight: 600;
    line-height: 53px;
    color: #b4b4b4;
    white-space: nowrap;
}
.ptab-on {
    width: 103px;
    border: none;
    background: #535353;
    color: #f0f0f0;
}
.tabs-menu {
    margin: 15px 0 0 55px;
}
.prow {
    display: flex;
    align-items: center;
    flex: none;
    box-sizing: border-box;
    padding-left: 5px;
    border-bottom: 2px solid #3f3f3f;
}
.prow-filter {
    height: 66px;
}
.prow-blend {
    height: 56px;
}
.prow-lock {
    height: 58px;
    border-bottom: none;
}
.drop {
    position: relative;
    display: flex;
    align-items: center;
    box-sizing: border-box;
    height: 38px;
    background: #434343;
    border: 2px solid #5e5e5e;
    border-radius: 5px;
    font-size: 20px;
    color: #e0e0e0;
    flex: none;
}
.drop-kind {
    width: 176px;
    margin-top: 10px;
    padding-left: 16px;
    gap: 3px;
}
.drop-blend {
    width: 262px;
    padding-left: 15px;
}
.chev {
    position: absolute;
    right: 7px;
    top: 11px;
    width: 8px;
    height: 8px;
    border-right: 2px solid #d8d8d8;
    border-bottom: 2px solid #d8d8d8;
    transform: rotate(45deg);
}
.filter-icons {
    margin-left: 8px;
}
.plabel {
    font-size: 20px;
    color: #c6c6c6;
    flex: none;
}
.plabel-op {
    margin: 0 5px 0 7px;
}
.prow-lock .plabel,
.prow-lock .num-box {
    margin-bottom: 6px;
}
.prow-lock .plabel:first-child {
    width: 60px;
    padding-left: 4px;
    box-sizing: border-box;
}
.plabel-fill {
    margin-left: 37px;
    margin-right: 5px;
}
.num-box {
    display: flex;
    box-sizing: border-box;
    width: 102px;
    height: 36px;
    flex: none;
    background: #434343;
    border: 2px solid #5e5e5e;
    border-radius: 5px;
    font-size: 20px;
    line-height: 32px;
    color: #e0e0e0;
}
.num-box span {
    width: 71px;
    padding-left: 5px;
    box-sizing: border-box;
    flex: none;
}
.num-box b {
    position: relative;
    flex: 1;
    border-left: 2px solid #5e5e5e;
    font-weight: 400;
}
.layer-wrap {
    display: flex;
    height: 81px;
    margin-top: 1px;
    flex: none;
    border-bottom: 3px solid #424242;
}
.layer-eye {
    display: flex;
    align-items: center;
    width: 59px;
    flex: none;
    box-sizing: border-box;
    padding-left: 17px;
}
.layer-main {
    display: flex;
    align-items: center;
    width: 430px;
    flex: none;
    background: #6a6a6a;
    padding-left: 4px;
    box-sizing: border-box;
}
.layer-name {
    margin-left: 12px;
    font-size: 20px;
    color: #d8d8d8;
}
.layer-scroll {
    flex: 1;
    background: #4d4d4d;
}
.panel-empty {
    display: flex;
    justify-content: flex-end;
    flex: 1;
    background: #4e4e4e;
}
.panel-scroll {
    width: 30px;
    background: #4c4c4c;
}
.panel-foot {
    height: 48px;
    flex: none;
    background: #535353;
    border-top: 2px solid #3f3f3f;
    border-bottom: 4px solid #3d3d3d;
}
.foot-icons {
    margin-left: 99px;
}
.fx-text {
    font-family: "Liberation Serif", serif;
    font-style: italic;
    font-size: 28px;
    fill: #d8d8d8;
}
.side-rule {
    width: 4px;
    flex: none;
    background: #3d3d3d;
}

/* Dock */
.dock {
    display: flex;
    flex-direction: column;
    flex: 1;
    background: #535353;
}
.dock-head {
    height: 22px;
    flex: none;
    background: #484848;
    border-bottom: 2px solid #3d3d3d;
}
.dock-group {
    flex: none;
    border-bottom: 2px solid #3d3d3d;
}
.grip {
    position: relative;
    top: 6px;
    width: 39px;
    height: 8px;
    margin: 0 0 17px 98px;
    background: repeating-linear-gradient(to right, #3f3f3f 0, #3f3f3f 2px, transparent 2px, transparent 4.400px);
}
.dock-group-mid .grip {
    margin-bottom: 16px;
}
.dock-group-mid .dock-row:last-child {
    margin-bottom: 9px;
}
.dock-row {
    display: flex;
    align-items: center;
    box-sizing: border-box;
    height: 46px;
    margin: 0 0 10px 8px;
    padding-left: 6px;
    border: 2px solid transparent;
    border-right: none;
    font-size: 20px;
    font-weight: 700;
    color: #e8e8e8;
}
.dock-row svg {
    margin-right: 18px;
}
.dock-on {
    background: #333;
    border-color: #4c4c4c;
    border-radius: 3px 0 0 3px;
}

/* Mac menus */
.menu {
    position: absolute;
    box-sizing: border-box;
    padding-top: 9px;
    background: rgba(236, 232, 229, .6);
    -webkit-backdrop-filter: blur(50px);
    backdrop-filter: blur(50px);
    border-radius: 14px;
    box-shadow: 0 6px 22px rgba(0, 0, 0, .32), 0 0 0 1px rgba(0, 0, 0, .1);
    font-family: Inter, "DejaVu Sans", sans-serif;
    font-size: 25px;
    letter-spacing: .28px;
    color: rgba(0, 0, 0, .87);
}
.menu-view {
    left: 1114px;
    top: 62px;
    width: 552px;
    height: 1154px;
    background: linear-gradient(
        rgba(236, 232, 229, .6) 0,
        rgba(236, 232, 229, .64) 240px,
        rgba(236, 232, 229, .72) 298px,
        rgba(236, 232, 229, .85) 337px,
        rgba(236, 232, 229, .9) 373px,
        rgba(236, 232, 229, .7) 430px,
        rgba(236, 232, 229, .6) 480px
    );
}
.menu-show {
    left: 1656px;
    top: 792px;
    width: 502px;
    height: 1007px;
}
.row {
    display: flex;
    align-items: center;
    height: 36px;
    white-space: nowrap;
    border-radius: 8px;
}
.menu-view .row {
    margin: 0 12px 0 20px;
    padding-right: 22px;
}
.menu-show .row {
    margin: 0 11px 0 10px;
    padding: 0 31px 0 9px;
}
.tick {
    width: 27px;
    flex: none;
    font-family: "DejaVu Sans", sans-serif;
    font-size: 28px;
    line-height: 1;
}
.menu-show .tick {
    width: 28px;
}
.off {
    color: rgba(0, 0, 0, .3);
}
.row-hover {
    background: #d2cdca;
}
.row-picked {
    color: #fff;
    background: linear-gradient(to right, #5c98f5 0, #5c98f5 130px, #4685e6 200px, #2d6bce 340px, #2d6bce 100%);
}
.menu-view .row-touch {
    margin-top: 5px;
}
.keys {
    display: flex;
    margin-left: auto;
    align-items: center;
    letter-spacing: 0;
}
.menu-view .keys {
    margin-right: 10px;
}
.keys em {
    font-family: "DejaVu Sans", sans-serif;
    font-style: normal;
    font-size: 24px;
    width: 27px;
    text-align: center;
}
.keys b {
    width: 20px;
    margin-left: 2px;
    font-weight: 400;
}
.shift {
    fill: none;
    stroke: currentColor;
    stroke-width: 2;
    margin-right: 3px;
}
.arrow {
    margin-left: auto;
    width: 8px;
    height: 8px;
    border-top: 2px solid rgba(0, 0, 0, .85);
    border-right: 2px solid rgba(0, 0, 0, .85);
    transform: rotate(45deg);
    margin-right: 2px;
}
.sep {
    height: 2px;
    margin: 12px 28px 8px;
    background: rgba(0, 0, 0, .16);
}

/* Yellow rings drawn on top of the captures */
.callout {
    position: absolute;
    box-sizing: border-box;
    border: 11px solid #fff94f;
    border-radius: 30px;
}
.callout-view {
    left: 1121px;
    top: 3px;
    width: 146px;
    height: 70px;
}
.callout-show {
    left: 1123px;
    top: 806px;
    width: 145px;
    height: 71px;
}
.callout-grid {
    left: 1647px;
    top: 898px;
    width: 147px;
    height: 72px;
}
```
